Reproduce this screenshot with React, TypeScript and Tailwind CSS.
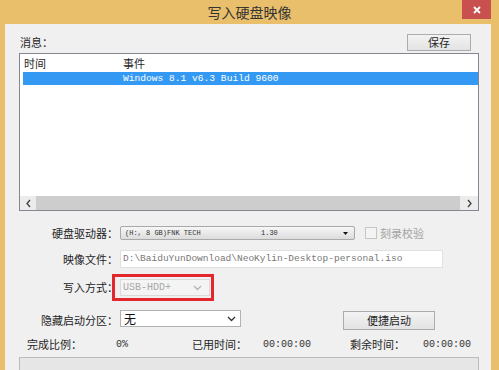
import React from "react";

function Chevron({ dir, color = "#404040" }: { dir: "left" | "right" | "down"; color?: string }) {
  const pts =
    dir === "left" ? "5,1 2,4.5 5,8" : dir === "right" ? "2,1 5,4.5 2,8" : "1,2 4.5,5.5 8,2";
  return (
    <svg width={dir === "down" ? 9 : 7} height={dir === "down" ? 7 : 9} viewBox={dir === "down" ? "0 0 9 7" : "0 0 7 9"}>
      <polyline points={pts} fill="none" stroke={color} strokeWidth="1.3" />
    </svg>
  );
}

function Btn({ label, className }: { label: string; className: string }) {
  return (
    <button
      type="button"
      className={`flex items-center justify-center border border-[#acacac] bg-gradient-to-b from-[#f3f3f3] to-[#e3e3e3] text-[11px] leading-none text-[#1f1f1f] ${className}`}
    >
      {label}
    </button>
  );
}

export default function App() {
  const label = "w-[99px] shrink-0 text-right text-[11px] leading-none text-[#1f1f1f]";
  const mono = "font-['Liberation_Mono',monospace]";

  return (
    <div className="w-[499px] h-[370px] overflow-hidden bg-[#eabf6c] flex flex-col font-['Noto_Sans_CJK_SC',sans-serif]">
      <header className="relative h-[24px] shrink-0 flex items-center justify-center">
        <h1 className="text-[14px] leading-none text-[#333]">写入硬盘映像</h1>
        <button
          type="button"
          className="absolute right-[8px] top-0 w-[29px] h-[19px] bg-[#c8504e] flex items-center justify-center"
        >
          <svg width="8" height="8" viewBox="0 0 8 8">
            <path d="M1 1L7 7M7 1L1 7" stroke="#fff" strokeWidth="1.8" />
          </svg>
        </button>
      </header>

      <div className="flex-1 min-h-0 flex pl-[5px] pr-[8px]">
        <main className="flex-1 bg-[#f0f0f0] pl-[14px] pr-[12px] pt-[10px] flex flex-col">
          {/* message header */}
          <div className="h-[17px] flex items-center justify-between">
            <span className="pl-[1px] text-[11px] leading-none text-[#1f1f1f]">消息：</span>
            <Btn label="保存" className="w-[64px] h-[17px] mr-[8px]" />
          </div>

          {/* list */}
          <section className="mt-[2px] h-[158px] shrink-0 border border-[#828790] bg-white flex flex-col">
            <div className="h-[18px] flex items-center text-[11px] leading-none text-[#1f1f1f]">
              <span className="w-[103px] pl-[4px]">时间</span>
              <span>事件</span>
            </div>
            <div className={`ml-[3px] h-[13px] bg-[#3399f3] flex items-center pl-[100px] text-[9.6px] leading-none text-white ${mono}`}>
              Windows 8.1 v6.3 Build 9600
            </div>
            <div className="flex-1" />
            <div className="h-[14px] flex">
              <div className="w-[16px] bg-[#ececec] flex items-center justify-center">
                <Chevron dir="left" />
              </div>
              <div className="flex-1 bg-[#cdcdcd]" />
              <div className="w-[18px] bg-[#ececec] flex items-center justify-center">
                <Chevron dir="right" />
              </div>
            </div>
          </section>

          {/* drive */}
          <div className="mt-[15px] h-[16px] flex items-center">
            <span className={label}>硬盘驱动器：</span>
            <div className={`ml-[2px] w-[235px] h-[14px] rounded-[2px] border border-[#a9a9a9] bg-gradient-to-b from-[#f7f7f7] to-[#dcdcdc] flex items-center pl-[4px] pr-[6px] text-[7px] leading-none text-[#333] ${mono}`}>
              <span className="w-[136px]">(H:, 8 GB)FNK TECH</span>
              <span className="flex-1">1.30</span>
              <svg width="5" height="3" viewBox="0 0 5 3">
                <path d="M0 0H5L2.5 3Z" fill="#111" />
              </svg>
            </div>
            <div className="ml-[10px] w-[12px] h-[12px] border border-[#c6c6c6] bg-[#f4f4f4]" />
            <span className="ml-[3px] text-[11px] leading-none text-[#a3a3a3]">刻录校验</span>
          </div>

          {/* image file */}
          <div className="mt-[10px] h-[18px] flex items-center">
            <span className={label}>映像文件：</span>
            <div className={`ml-[2px] w-[323px] h-[18px] border border-[#e1e1e1] bg-white flex items-center pl-[2px] text-[9.5px] leading-none text-[#777] ${mono}`}>
              D:\BaiduYunDownload\NeoKylin-Desktop-personal.iso
            </div>
          </div>

          {/* write mode */}
          <div className="mt-[11px] h-[17px] flex items-center">
            <span className={label}>写入方式：</span>
            <div className="relative ml-[2px]">
              <div className={`w-[90px] h-[17px] border border-[#dadada] bg-[#f4f4f4] flex items-center justify-between pl-[2px] pr-[7px] text-[10px] leading-none text-[#a8a8a8] ${mono}`}>
                <span>USB-HDD+</span>
                <Chevron dir="down" color="#b4b4b4" />
              </div>
              <div className="absolute -left-[8px] -right-[4px] -top-[5px] -bottom-[5px] border-[3px] border-[#e2282c]" />
            </div>
          </div>

          {/* hidden partition */}
          <div className="mt-[13px] h-[21px] flex items-start">
            <span className={`${label} mt-[6px]`}>隐藏启动分区：</span>
            <div className="ml-[2px] mt-[1px] w-[121px] h-[17px] border border-[#b2b2b2] bg-white flex items-center justify-between pl-[3px] pr-[4px]">
              <span className="text-[12px] leading-none text-[#111]">无</span>
              <Chevron dir="down" color="#333" />
            </div>
            <Btn label="便捷启动" className="ml-[102px] mt-[2px] w-[92px] h-[19px]" />
          </div>

          {/* status */}
          <div className="mt-[9px] h-[18px] flex items-center pl-[8px] text-[11px] leading-none text-[#1f1f1f]">
            <span className="w-[89px]">完成比例：</span>
            <span className={`w-[76px] text-[10px] text-[#333] ${mono}`}>0%</span>
            <span className="w-[71px]">已用时间：</span>
            <span className={`w-[87px] text-[10px] text-[#333] ${mono}`}>00:00:00</span>
            <span className="w-[73px]">剩余时间：</span>
            <span className={`text-[10px] text-[#333] ${mono}`}>00:00:00</span>
          </div>

          {/* progress */}
          <div className="mt-[7px] h-[14px] shrink-0 border border-[#bcbcbc] bg-[#e6e6e6]" />
        </main>
      </div>
    </div>
  );
}
